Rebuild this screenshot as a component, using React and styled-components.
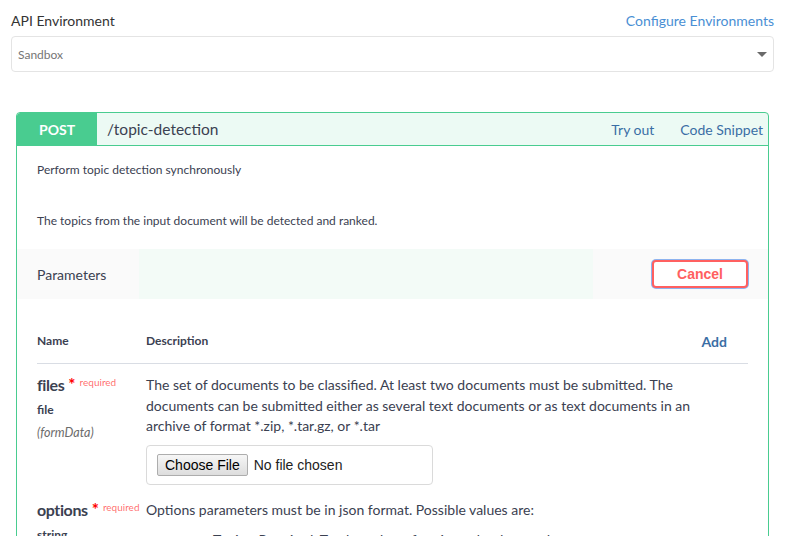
import React from "react";
import styled, { createGlobalStyle } from "styled-components";

const GlobalStyle = createGlobalStyle`
  html, body {
    margin: 0;
    padding: 0;
    background: #fff;
  }
  body {
    font-family: Lato, "Liberation Sans", sans-serif;
    color: #3b4151;
  }
  * {
    box-sizing: border-box;
  }
`;

const Page = styled.div`
  height: 536px;
  overflow: hidden;
  padding: 11px 13px 0 11px;
`;

const EnvHeader = styled.div`
  display: flex;
  align-items: center;
  justify-content: space-between;
  height: 18px;
  margin-bottom: 7px;
`;

const EnvLabel = styled.span`
  font-size: 14px;
  color: #333;
`;

const EnvLink = styled.a`
  font-size: 14px;
  color: #4a8fd4;
  text-decoration: none;
`;

const Select = styled.div`
  height: 36px;
  border: 1px solid #e4e4e4;
  border-radius: 4px;
  display: flex;
  align-items: center;
  justify-content: space-between;
  padding: 0 6px 0 6px;
  font-size: 12px;
  color: #757575;
`;

const Caret = styled.span`
  width: 0;
  height: 0;
  border-left: 5px solid transparent;
  border-right: 5px solid transparent;
  border-top: 5px solid #6a6a6a;
`;

const OpBlock = styled.div`
  margin: 40px 5px 0;
  border: 1px solid #49cc90;
  border-radius: 4px;
  overflow: hidden;
`;

const OpHeader = styled.div`
  display: flex;
  align-items: stretch;
  height: 33px;
  background: rgba(73, 204, 144, 0.1);
  border-bottom: 1px solid #49cc90;
`;

const Method = styled.div`
  width: 80px;
  display: flex;
  align-items: center;
  justify-content: center;
  background: #49cc90;
  color: #fff;
  font-size: 14px;
  font-weight: 700;
  border-top-left-radius: 3px;
`;

const Path = styled.div`
  flex: 1;
  display: flex;
  align-items: center;
  margin-left: 10px;
  font-size: 15.5px;
  color: #3b4151;
`;

const Actions = styled.div`
  display: flex;
  align-items: center;
  gap: 26px;
  padding-right: 5px;
`;

const ActionLink = styled.a`
  font-size: 14px;
  color: #3a6ea5;
  text-decoration: none;
`;

const Summary = styled.div`
  display: flex;
  flex-direction: column;
  gap: 36px;
  padding: 16px 20px 21px;
`;

const SummaryText = styled.p`
  margin: 0;
  font-size: 12px;
  line-height: 15px;
  color: #3b4151;
`;

const SectionHeader = styled.div`
  height: 50px;
  display: flex;
  align-items: center;
  justify-content: space-between;
  padding: 0 20px;
  background: linear-gradient(90deg, #fafafa 0, #fafafa 122px, #f3fbf7 122px, #f3fbf7 576px, #fafafa 576px);
`;

const SectionTitle = styled.span`
  font-size: 14px;
  color: #3b4151;
`;

const CancelButton = styled.button`
  width: 96px;
  height: 28px;
  border: 2px solid #ff6060;
  border-radius: 4px;
  background: #fff;
  color: #ff6060;
  font-family: "Liberation Sans", Arial, sans-serif;
  font-size: 14px;
  font-weight: 700;
  box-shadow: 0 0 0 1px #8db3ef;
  cursor: pointer;
`;

const Table = styled.div`
  padding: 0 20px;
`;

const HeadRow = styled.div`
  display: flex;
  align-items: flex-end;
  height: 65px;
  padding-bottom: 15px;
  border-bottom: 1px solid #d9dde4;
`;

const HeadCell = styled.div`
  width: ${({ $w }) => ($w ? `${$w}px` : "auto")};
  flex: ${({ $w }) => ($w ? "none" : 1)};
  font-size: 12px;
  font-weight: 700;
  line-height: 15px;
  color: #3b4151;
`;

const AddLink = styled.a`
  font-size: 14px;
  font-weight: 700;
  color: #3a6ea5;
  margin-right: 21px;
  line-height: 15px;
  transform: translateY(1px);
`;

const ParamRow = styled.div`
  display: flex;
  align-items: flex-start;
  padding-top: ${({ $top }) => $top}px;
`;

const NameCell = styled.div`
  width: 109px;
  flex: none;
`;

const ParamName = styled.div`
  font-size: 16px;
  font-weight: 700;
  line-height: 14px;
  letter-spacing: -0.4px;
  color: #3b4151;
  white-space: nowrap;
`;

const Star = styled.span`
  color: #f00;
  font-size: 17px;
  font-weight: 700;
  margin-left: 4px;
  letter-spacing: 0;
`;

const Required = styled.span`
  color: rgba(255, 0, 0, 0.6);
  font-size: 10px;
  font-weight: 400;
  margin-left: 4px;
  vertical-align: 5px;
  letter-spacing: 0;
`;

const ParamType = styled.div`
  margin-top: 10px;
  font-size: 12px;
  font-weight: 700;
  line-height: 16px;
  color: #3b4151;
`;

const ParamIn = styled.div`
  margin-top: 7px;
  font-size: 12.5px;
  font-style: italic;
  line-height: 16px;
  color: #6b6b6b;
`;

const DescCell = styled.div`
  flex: 1;
  font-size: 14px;
  line-height: 20.5px;
  color: #3b4151;
`;

const DescText = styled.p`
  margin: 0;
  padding-right: 50px;
`;

const FileBox = styled.div`
  margin-top: 8px;
  width: 287px;
  height: 40px;
  border: 1px solid #dadada;
  border-radius: 4px;
  display: flex;
  align-items: center;
  padding: 0 10px;
`;

const FileInput = styled.input`
  font-family: "Liberation Sans", Arial, sans-serif;
  font-size: 14px;
  color: #222;

  &::file-selector-button {
    font-family: "Liberation Sans", Arial, sans-serif;
    font-size: 14px;
    height: 22px;
    padding: 0 7px;
    margin-right: 6px;
    border: 1px solid #adadad;
    border-radius: 2px;
    background: linear-gradient(#f6f6f6, #dddddd);
    color: #000;
  }
`;

const ValueList = styled.ul`
  margin: 10px 0 0;
  padding-left: 67px;
`;

const ValueItem = styled.li`
  font-size: 14px;
  line-height: 20px;
`;

export default function App() {
  return (
    <>
      <GlobalStyle />
      <Page>
        <EnvHeader>
          <EnvLabel>API Environment</EnvLabel>
          <EnvLink href="#">Configure Environments</EnvLink>
        </EnvHeader>
        <Select>
          <span>Sandbox</span>
          <Caret />
        </Select>

        <OpBlock>
          <OpHeader>
            <Method>POST</Method>
            <Path>/topic-detection</Path>
            <Actions>
              <ActionLink href="#">Try out</ActionLink>
              <ActionLink href="#">Code Snippet</ActionLink>
            </Actions>
          </OpHeader>

          <Summary>
            <SummaryText>Perform topic detection synchronously</SummaryText>
            <SummaryText>The topics from the input document will be detected and ranked.</SummaryText>
          </Summary>

          <SectionHeader>
            <SectionTitle>Parameters</SectionTitle>
            <CancelButton>Cancel</CancelButton>
          </SectionHeader>

          <Table>
            <HeadRow>
              <HeadCell $w={109}>Name</HeadCell>
              <HeadCell>Description</HeadCell>
              <AddLink>Add</AddLink>
            </HeadRow>

            <ParamRow $top={11}>
              <NameCell>
                <ParamName>
                  files<Star>*</Star>
                  <Required>required</Required>
                </ParamName>
                <ParamType>file</ParamType>
                <ParamIn>(formData)</ParamIn>
              </NameCell>
              <DescCell>
                <DescText>
                  The set of documents to be classified. At least two documents must be submitted. The
                  documents can be submitted either as several text documents or as text documents in an
                  archive of format *.zip, *.tar.gz, or *.tar
                </DescText>
                <FileBox>
                  <FileInput type="file" />
                </FileBox>
              </DescCell>
            </ParamRow>

            <ParamRow $top={15}>
              <NameCell>
                <ParamName>
                  options<Star>*</Star>
                  <Required>required</Required>
                </ParamName>
                <ParamType>string</ParamType>
              </NameCell>
              <DescCell>
                <DescText>Options parameters must be in json format. Possible values are:</DescText>
                <ValueList>
                  <ValueItem>Topics: Required. Total number of topics to be detected</ValueItem>
                </ValueList>
              </DescCell>
            </ParamRow>
          </Table>
        </OpBlock>
      </Page>
    </>
  );
}
